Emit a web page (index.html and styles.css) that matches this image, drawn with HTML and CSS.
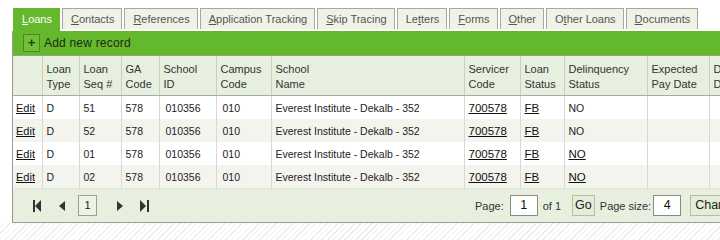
FILE: index.html
```html
<!DOCTYPE html>
<html>
<head>
    <title>Loans</title>
    <link rel="stylesheet" href="styles.css">
</head>
<body>
    <div class="page">
        <ul class="tabs">
            <li class="tab active"><u>L</u>oans</li>
            <li class="tab"><u>C</u>ontacts</li>
            <li class="tab"><u>R</u>eferences</li>
            <li class="tab"><u>A</u>pplication Tracking</li>
            <li class="tab"><u>S</u>kip Tracing</li>
            <li class="tab">Le<u>t</u>ters</li>
            <li class="tab"><u>F</u>orms</li>
            <li class="tab"><u>O</u>ther</li>
            <li class="tab">O<u>t</u>her Loans</li>
            <li class="tab"><u>D</u>ocuments</li>
        </ul>
        <div class="grid">
            <div class="toolbar">
                <span class="add-btn">+</span>
                <span class="add-text">Add new record</span>
            </div>
            <table class="data">
                <colgroup>
                    <col style="width:29px">
                    <col style="width:37px">
                    <col style="width:42px">
                    <col style="width:38px">
                    <col style="width:57px">
                    <col style="width:55px">
                    <col style="width:193px">
                    <col style="width:56px">
                    <col style="width:44px">
                    <col style="width:83px">
                    <col style="width:62px">
                    <col style="width:70px">
                </colgroup>
                <thead>
                    <tr>
                        <th></th>
                        <th>Loan<br>Type</th>
                        <th>Loan<br>Seq #</th>
                        <th>GA<br>Code</th>
                        <th>School<br>ID</th>
                        <th>Campus<br>Code</th>
                        <th>School<br>Name</th>
                        <th>Servicer<br>Code</th>
                        <th>Loan<br>Status</th>
                        <th>Delinquency<br>Status</th>
                        <th>Expected<br>Pay Date</th>
                        <th>Date<br>Default</th>
                    </tr>
                </thead>
                <tbody>
                    <tr>
                        <td class="edit"><a href="#">Edit</a></td>
                        <td>D</td>
                        <td>51</td>
                        <td>578</td>
                        <td class="pad">010356</td>
                        <td class="pad">010</td>
                        <td>Everest Institute - Dekalb - 352</td>
                        <td><a href="#">700578</a></td>
                        <td><a href="#">FB</a></td>
                        <td>NO</td>
                        <td></td>
                        <td></td>
                    </tr>
                    <tr class="alt">
                        <td class="edit"><a href="#">Edit</a></td>
                        <td>D</td>
                        <td>52</td>
                        <td>578</td>
                        <td class="pad">010356</td>
                        <td class="pad">010</td>
                        <td>Everest Institute - Dekalb - 352</td>
                        <td><a href="#">700578</a></td>
                        <td><a href="#">FB</a></td>
                        <td>NO</td>
                        <td></td>
                        <td></td>
                    </tr>
                    <tr>
                        <td class="edit"><a href="#">Edit</a></td>
                        <td>D</td>
                        <td>01</td>
                        <td>578</td>
                        <td class="pad">010356</td>
                        <td class="pad">010</td>
                        <td>Everest Institute - Dekalb - 352</td>
                        <td><a href="#">700578</a></td>
                        <td><a href="#">FB</a></td>
                        <td><a href="#">NO</a></td>
                        <td></td>
                        <td></td>
                    </tr>
                    <tr class="alt">
                        <td class="edit"><a href="#">Edit</a></td>
                        <td>D</td>
                        <td>02</td>
                        <td>578</td>
                        <td class="pad">010356</td>
                        <td class="pad">010</td>
                        <td>Everest Institute - Dekalb - 352</td>
                        <td><a href="#">700578</a></td>
                        <td><a href="#">FB</a></td>
                        <td><a href="#">NO</a></td>
                        <td></td>
                        <td></td>
                    </tr>
                </tbody>
            </table>
            <div class="pager">
                <div class="pager-nav">
                    <svg class="nav-icon" width="9" height="12" viewBox="0 0 9 12"><rect x="0" y="0" width="2" height="12" fill="#333"/><polygon points="8,0 8,12 2,6" fill="#333"/></svg>
                    <svg class="nav-icon" width="6" height="12" viewBox="0 0 6 12"><polygon points="6,1 6,11 0,6" fill="#333"/></svg>
                    <span class="page-num">1</span>
                    <svg class="nav-icon" width="6" height="12" viewBox="0 0 6 12"><polygon points="0,1 0,11 6,6" fill="#333"/></svg>
                    <svg class="nav-icon" width="9" height="12" viewBox="0 0 9 12"><polygon points="0,0 0,12 6,6" fill="#333"/><rect x="7" y="0" width="2" height="12" fill="#333"/></svg>
                </div>
                <div class="pager-info">
                    <span class="label">Page:</span>
                    <span class="box">1</span>
                    <span class="label">of 1</span>
                    <span class="btn go">Go</span>
                    <span class="label size">Page size:</span>
                    <span class="box">4</span>
                    <span class="btn change">Change</span>
                </div>
            </div>
        </div>
        <div class="hatch"></div>
    </div>
</body>
</html>
```

FILE: styles.css
```css
body {
    margin: 0;
    font-family: "Liberation Sans", Arial, sans-serif;
    font-size: 11px;
    color: #222;
    background: #fff;
    overflow: hidden;
}
.page {
    padding: 8px 0 0 12px;
    width: 820px;
}
.tabs {
    list-style: none;
    margin: 0 0 0 1px;
    padding: 0;
    display: flex;
    gap: 2px;
}
.tab {
    height: 20px;
    line-height: 20px;
    padding: 0 7px 0 8px;
    background: #eef3e6;
    border: 1px solid #a6a6a6;
    border-bottom: none;
    color: #555;
    font-size: 11px;
}
.tab.active {
    background: #64b82b;
    border-color: #64b82b;
    color: #fff;
    height: 22px;
}
.grid {
    width: 766px;
    border-left: 1px solid #9a9a9a;
    border-bottom: 1px solid #9a9a9a;
}
.toolbar {
    height: 25px;
    background: #64b82b;
    display: flex;
    align-items: center;
    border-bottom: 1px solid #8aa87a;
    box-sizing: border-box;
}
.add-btn {
    width: 15px;
    height: 16px;
    margin-left: 10px;
    border: 1px solid #4a8a20;
    background: #6fbf38;
    color: #1c3a0c;
    font-weight: bold;
    font-size: 13px;
    line-height: 15px;
    text-align: center;
}
.add-text {
    margin-left: 4px;
    color: #1f2a14;
    font-size: 12px;
    letter-spacing: 0.2px;
}
.data {
    border-collapse: collapse;
    table-layout: fixed;
    width: 766px;
}
.data th {
    background: #e7f0de;
    font-weight: normal;
    color: #333;
    text-align: left;
    vertical-align: top;
    padding: 6px 4px 0;
    height: 33px;
    line-height: 15px;
    border-right: 1px solid #c9d0c2;
    border-bottom: 1px solid #a9a9a9;
}
.data td {
    height: 23px;
    padding: 0 4px;
    font-size: 10.5px;
    border-right: 1px solid #d8d8d8;
    white-space: nowrap;
    overflow: hidden;
}
.data tr.alt td {
    background: #f4f4ee;
}
.data td.edit {
    padding-left: 3px;
}
.data td.pad {
    padding-left: 6px;
}
.data a {
    color: #111;
    text-decoration: underline;
    font-size: 11.5px;
}
.data td.edit a {
    font-size: 11px;
}
.pager {
    height: 33px;
    background: #e7f0de;
    border-top: 1px solid #e0e6da;
    display: flex;
    align-items: center;
}
.pager-nav {
    display: flex;
    align-items: center;
    margin-left: 20px;
}
.nav-icon {
    margin-right: 17px;
}
.page-num {
    width: 17px;
    height: 19px;
    border: 1px solid #9aa394;
    background: #eef3e6;
    text-align: center;
    line-height: 19px;
    margin: 0 20px 0 -4px;
}
.pager-info {
    display: flex;
    align-items: center;
    margin-left: 309px;
    font-size: 11px;
    color: #333;
}
.label {
    margin-right: 6px;
}
.label.size {
    margin-right: 2px;
}
.box {
    width: 26px;
    height: 19px;
    margin-right: 5px;
    border: 1px solid #8a8a8a;
    background: #fff;
    text-align: center;
    line-height: 19px;
    font-size: 12.5px;
    color: #111;
}
.btn {
    height: 19px;
    line-height: 19px;
    padding: 0 2px;
    border: 1px solid #b4bcaa;
    background: #e3edd8;
    font-size: 12.5px;
    color: #222;
}
.btn.go {
    margin-left: 5px;
    margin-right: 5px;
}
.btn.change {
    margin-left: 4px;
    padding: 0 4px;
}
.hatch {
    height: 40px;
    margin-left: -12px;
    background: repeating-linear-gradient(135deg, #fff 0, #fff 3px, #ececec 3px, #ececec 4px);
}
```
